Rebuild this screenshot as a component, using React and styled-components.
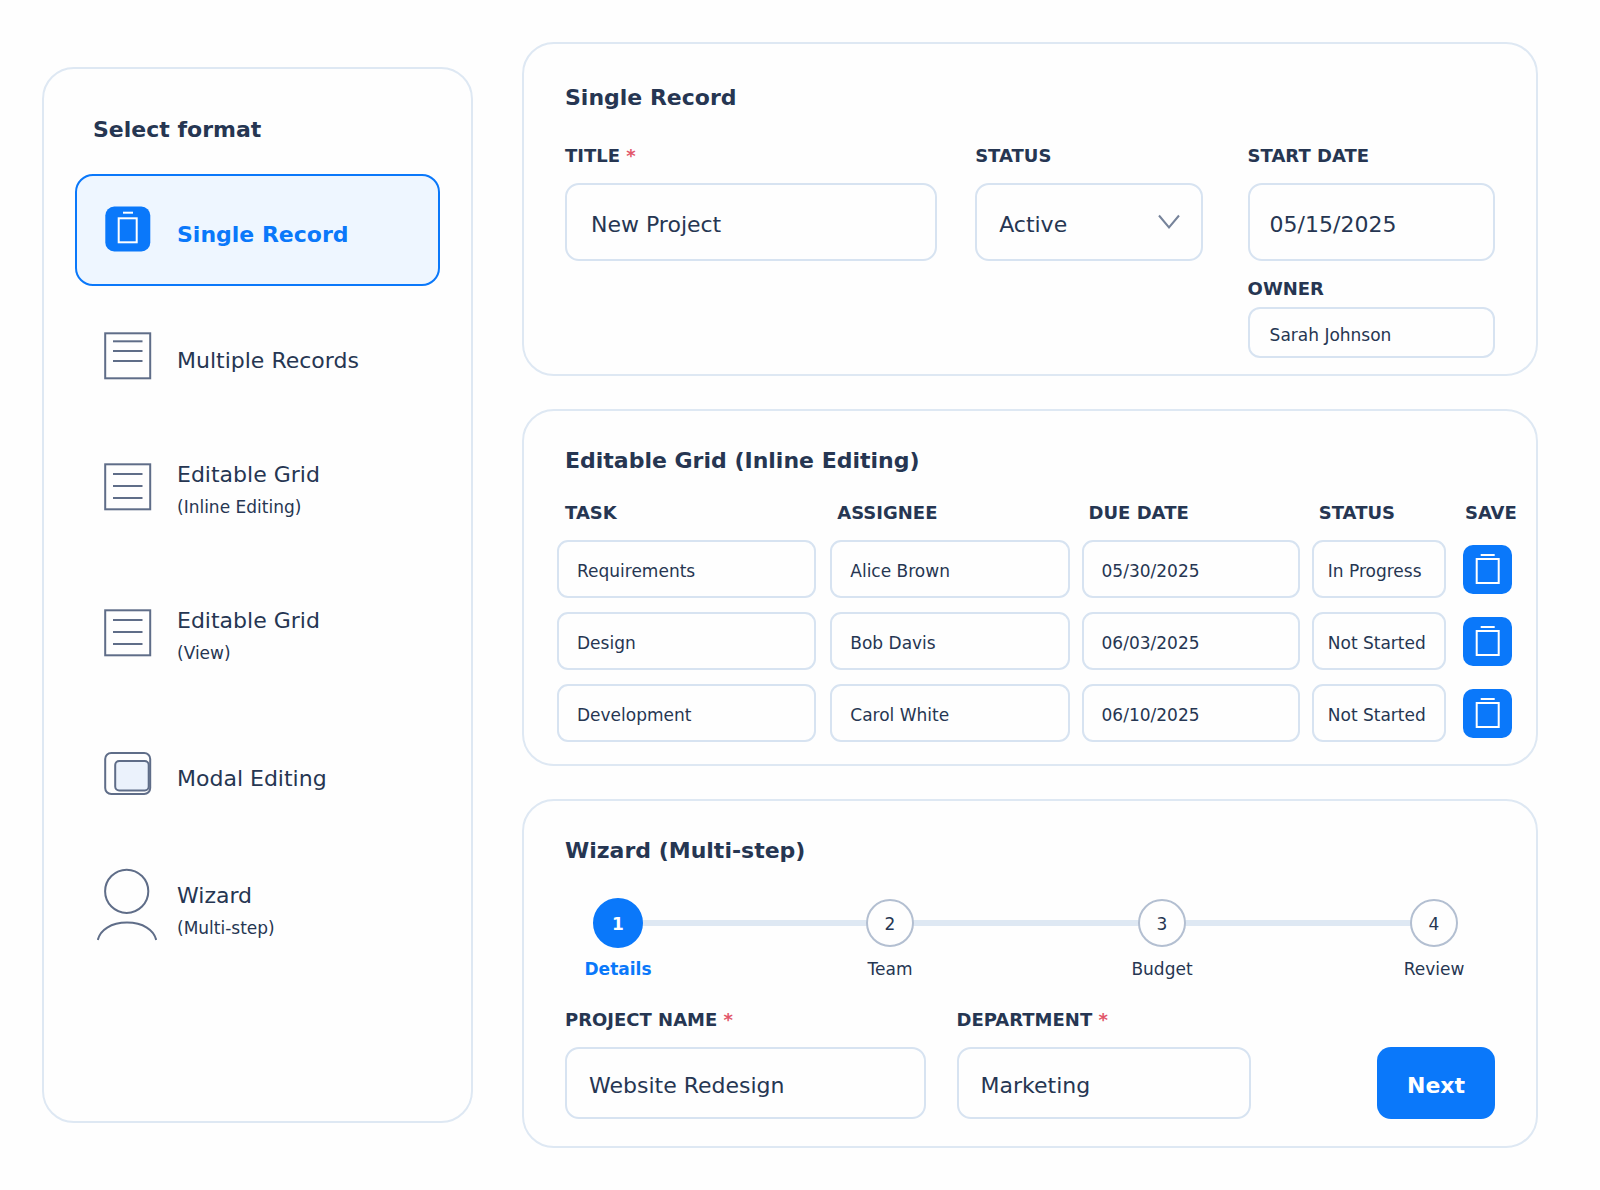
import React, { useState } from 'react';
import styled, { createGlobalStyle } from 'styled-components';

const ink = '#263652';
const blue = '#0a78fa';
const paper = '#fefefe';
const line = '#d7e3f1';
const cardLine = '#dee8f3';
const iconLine = '#5f6d88';

const GlobalStyle = createGlobalStyle`
    * {
        box-sizing: border-box;
    }
    body {
        margin: 0;
        background: ${paper};
        color: ${ink};
        font-family: "DejaVu Sans", Verdana, sans-serif;
    }
    button, input, select {
        font-family: inherit;
        color: inherit;
    }
`;

const Page = styled.div`
    display: grid;
    grid-template-columns: 431px minmax(0, 1fr);
    column-gap: 49px;
    padding: 42px 62px 42px 42px;
`;

const Sidebar = styled.nav`
    margin: 25px 0;
    padding: 48px 31px 31px;
    border: 2px solid ${cardLine};
    border-radius: 32px;
`;

const Heading = styled.h2`
    margin: 0;
    font-size: 22px;
    line-height: 26px;
    font-weight: 700;
`;

const SidebarHeading = styled(Heading)`
    padding: 0 18px;
    margin-bottom: 31px;
`;

const FormatList = styled.div`
    display: flex;
    flex-direction: column;
    gap: 14px;
`;

const FormatButton = styled.button`
    display: flex;
    align-items: center;
    gap: 20px;
    min-height: ${props => props.$height}px;
    padding: 0 20px;
    text-align: left;
    cursor: pointer;
    border: 2px solid ${props => props.$active ? blue : 'transparent'};
    border-radius: 18px;
    background: ${props => props.$active ? '#eef6ff' : 'transparent'};
    color: ${props => props.$active ? blue : ink};
    font-weight: ${props => props.$active ? 700 : 400};
`;

const FormatIcon = styled.svg`
    flex: none;
    width: 60px;
    height: 80px;
    fill: none;
    stroke: ${iconLine};
    stroke-width: 2;
`;

const FormatText = styled.span`
    display: flex;
    flex-direction: column;
    gap: 8px;
    padding-top: ${props => props.$single ? 10 : 5}px;
    font-size: 22px;
    line-height: 26px;
`;

const FormatNote = styled.span`
    font-size: 17px;
    line-height: 22px;
`;

const Content = styled.main`
    display: flex;
    flex-direction: column;
    gap: 33px;
`;

const Card = styled.section`
    border: 2px solid ${cardLine};
    border-radius: 32px;
    padding: 37px 41px 27px;
`;

const RecordCard = styled(Card)`
    padding-top: 41px;
    padding-bottom: 16px;
`;

const GridCard = styled(Card)`
    padding: 37px 13px 22px 33px;

    ${Heading} {
        padding-left: 8px;
    }
`;

const RecordForm = styled.form`
    display: grid;
    grid-template-columns: 373fr 228fr 255fr;
    column-gap: 38px;
    align-items: start;
    margin-top: 34px;
`;

const DateColumn = styled.div`
    display: flex;
    flex-direction: column;
    gap: 17px;
    padding-left: 7px;
`;

const Field = styled.div`
    display: flex;
    flex-direction: column;
    gap: ${props => props.$tight ? 7 : 16}px;
`;

const Label = styled.label`
    font-size: 18px;
    line-height: 22px;
    font-weight: 700;
`;

const Star = styled.span`
    color: #e2566a;
`;

const Input = styled.input`
    width: 100%;
    height: ${props => props.$height || 72}px;
    padding: 4px 22px 0;
    border: 2px solid ${line};
    border-radius: 14px;
    background: ${paper};
    font-size: 22px;
    outline: none;
    &:focus {
        border-color: ${blue};
    }
`;

const TitleInput = styled(Input)`
    padding: 4px 24px 0;
`;

const DateInput = styled(Input)`
    padding: 4px 20px 0;
`;

const OwnerInput = styled(DateInput)`
    border-radius: 12px;
    font-size: 17px;
`;

const SelectBox = styled.div`
    display: grid;
    align-items: center;

    & > * {
        grid-area: 1 / 1;
    }
`;

const Select = styled(Input).attrs({ as: 'select' })`
    appearance: none;
`;

const Chevron = styled.svg`
    justify-self: end;
    width: 22px;
    height: 16px;
    margin-right: 23px;
    fill: none;
    stroke: #76839a;
    stroke-width: 2;
    pointer-events: none;
`;

const Table = styled.table`
    width: 100%;
    margin-top: 28px;
    table-layout: fixed;
    border-collapse: collapse;
`;

const Col = styled.col`
    width: ${props => props.$width}px;
`;

const Th = styled.th`
    padding: 0 0 16px ${props => props.$inset}px;
    font-size: 18px;
    line-height: 22px;
    font-weight: 700;
    text-align: left;
    white-space: nowrap;
`;

const Td = styled.td`
    padding: 0 ${props => props.$gap}px 14px 0;
    vertical-align: middle;

    tr:last-child > & {
        padding-bottom: 0;
    }
`;

const CellInput = styled(Input)`
    display: block;
    padding: 4px 4px 0 ${props => props.$inset}px;
    border-radius: 11px;
    font-size: 17px;
`;

const SaveButton = styled.button`
    display: block;
    width: 49px;
    height: 49px;
    padding: 0;
    border: 0;
    border-radius: 10px;
    background: ${blue};
    cursor: pointer;

    svg {
        display: block;
        fill: none;
        stroke: white;
        stroke-width: 2;
    }
`;

const Steps = styled.ol`
    display: flex;
    align-items: flex-start;
    list-style: none;
    margin: 34px 11px 29px 3px;
    padding: 0;
`;

const Step = styled.li`
    display: flex;
    flex-direction: column;
    align-items: center;
    gap: 10px;
    width: 100px;
    z-index: 1;
    font-size: 17px;
    line-height: 22px;
    color: ${props => props.$active ? blue : ink};
    font-weight: ${props => props.$active ? 700 : 400};
`;

const StepCircle = styled.span`
    display: flex;
    align-items: center;
    justify-content: center;
    width: ${props => props.$active ? 50 : 48}px;
    height: ${props => props.$active ? 50 : 48}px;
    margin: ${props => props.$active ? 0 : 1}px;
    padding-top: 2px;
    border-radius: 50%;
    border: 2px solid ${props => props.$active ? blue : '#b3bfd1'};
    background: ${props => props.$active ? blue : paper};
    color: ${props => props.$active ? 'white' : ink};
`;

const Connector = styled.li`
    flex: 1;
    height: 6px;
    margin: 22px -27px 0;
    background: ${cardLine};
`;

const WizardForm = styled.form`
    display: grid;
    grid-template-columns: 361fr 295fr 213fr;
    column-gap: 31px;
    align-items: end;
`;

const NextButton = styled.button`
    justify-self: end;
    width: 118px;
    height: 72px;
    padding: 4px 0 0;
    border: 0;
    border-radius: 14px;
    background: ${blue};
    color: white;
    font-size: 22px;
    font-weight: 700;
    cursor: pointer;
`;

function SingleIcon() {
    return (
        <FormatIcon viewBox="0 -4 60 80" aria-hidden="true">
            <rect x="8.3" y="12.5" width="45" height="45" rx="9" fill={blue} stroke="none" />
            <rect x="21.7" y="24.3" width="18" height="24" stroke="white" />
            <path d="M26 18.7h10" stroke="white" />
        </FormatIcon>
    )
}

function ListIcon({ lines }) {
    return (
        <FormatIcon viewBox="0 -4 60 80" aria-hidden="true">
            <rect x="8.2" y="13.3" width="45" height="45" />
            {lines.map(y => <path key={y} d={`M16 ${y}h29.5`} />)}
        </FormatIcon>
    )
}

function ModalIcon() {
    return (
        <FormatIcon viewBox="0 -4 60 80" aria-hidden="true">
            <rect x="8.2" y="15" width="45" height="41" rx="6" />
            <rect x="18.2" y="23" width="33.5" height="29.5" rx="4" fill="#ebf2fc" />
        </FormatIcon>
    )
}

function PersonIcon() {
    return (
        <FormatIcon viewBox="0 -4 60 80" aria-hidden="true">
            <circle cx="29.7" cy="19.3" r="21.6" />
            <path d="M0.8 68C3 58 14 50.6 30 50.6S57 58 59.2 68" />
        </FormatIcon>
    )
}

const formats = [
    { id: 'single', name: 'Single Record', height: 112, icon: <SingleIcon /> },
    { id: 'multiple', name: 'Multiple Records', height: 112, icon: <ListIcon lines={[21.3, 31, 41]} /> },
    { id: 'grid', name: 'Editable Grid', note: '(Inline Editing)', height: 122, icon: <ListIcon lines={[23, 35, 47]} /> },
    { id: 'view', name: 'Editable Grid', note: '(View)', height: 142, icon: <ListIcon lines={[23, 35, 47]} /> },
    { id: 'modal', name: 'Modal Editing', height: 112, icon: <ModalIcon /> },
    { id: 'wizard', name: 'Wizard', note: '(Multi-step)', height: 128, icon: <PersonIcon /> },
];

const columns = [
    { name: 'Task', width: 273, head: 8, inset: 18, gap: 14 },
    { name: 'Assignee', width: 251, head: 7, inset: 18, gap: 12 },
    { name: 'Due date', width: 230, head: 7, inset: 18, gap: 12 },
    { name: 'Status', width: 151, head: 7, inset: 14, gap: 17 },
];

const tasks = [
    ['Requirements', 'Alice Brown', '05/30/2025', 'In Progress'],
    ['Design', 'Bob Davis', '06/03/2025', 'Not Started'],
    ['Development', 'Carol White', '06/10/2025', 'Not Started'],
];

const steps = ['Details', 'Team', 'Budget', 'Review'];

function FormatMenu() {
    const [active, setActive] = useState('single');
    return (
        <Sidebar>
            <SidebarHeading>Select format</SidebarHeading>
            <FormatList>
                {formats.map(f => (
                    <FormatButton
                        key={f.id}
                        type="button"
                        $active={f.id === active}
                        $height={f.height}
                        aria-pressed={f.id === active}
                        onClick={() => setActive(f.id)}
                    >
                        {f.icon}
                        <FormatText $single={!f.note}>
                            {f.name}
                            {f.note && <FormatNote>{f.note}</FormatNote>}
                        </FormatText>
                    </FormatButton>
                ))}
            </FormatList>
        </Sidebar>
    )
}

function SingleRecord() {
    return (
        <RecordCard>
            <Heading>Single Record</Heading>
            <RecordForm>
                <Field>
                    <Label htmlFor="title">TITLE <Star>*</Star></Label>
                    <TitleInput id="title" $height={78} defaultValue="New Project" required />
                </Field>
                <Field>
                    <Label htmlFor="status">STATUS</Label>
                    <SelectBox>
                        <Select id="status" $height={78} defaultValue="Active">
                            <option>Active</option>
                            <option>Inactive</option>
                        </Select>
                        <Chevron viewBox="0 0 22 16" aria-hidden="true">
                            <path d="M1 1.5L11 13.5L21 1.5" />
                        </Chevron>
                    </SelectBox>
                </Field>
                <DateColumn>
                    <Field>
                        <Label htmlFor="start">START DATE</Label>
                        <DateInput id="start" $height={78} defaultValue="05/15/2025" />
                    </Field>
                    <Field $tight>
                        <Label htmlFor="owner">OWNER</Label>
                        <OwnerInput id="owner" $height={51} defaultValue="Sarah Johnson" />
                    </Field>
                </DateColumn>
            </RecordForm>
        </RecordCard>
    )
}

function EditableGrid() {
    return (
        <GridCard>
            <Heading>Editable Grid (Inline Editing)</Heading>
            <Table>
                <colgroup>
                    {columns.map(c => <Col key={c.name} $width={c.width} />)}
                    <Col $width={60} />
                </colgroup>
                <thead>
                    <tr>
                        {columns.map(c => <Th key={c.name} scope="col" $inset={c.head}>{c.name.toUpperCase()}</Th>)}
                        <Th scope="col" $inset={2}>SAVE</Th>
                    </tr>
                </thead>
                <tbody>
                    {tasks.map(row => (
                        <tr key={row[0]}>
                            {columns.map((c, i) => (
                                <Td key={c.name} $gap={c.gap}>
                                    <CellInput $height={58} $inset={c.inset} aria-label={c.name} defaultValue={row[i]} />
                                </Td>
                            ))}
                            <Td $gap={0}>
                                <SaveButton type="button" aria-label={`Save ${row[0]}`}>
                                    <svg width="49" height="49" viewBox="0 0 49 49" aria-hidden="true">
                                        <rect x="13.7" y="14" width="22" height="24" />
                                        <path d="M17.7 10h14" />
                                    </svg>
                                </SaveButton>
                            </Td>
                        </tr>
                    ))}
                </tbody>
            </Table>
        </GridCard>
    )
}

function Wizard() {
    return (
        <Card>
            <Heading>Wizard (Multi-step)</Heading>
            <Steps>
                {steps.map((name, i) => (
                    <React.Fragment key={name}>
                        {i > 0 && <Connector aria-hidden="true" />}
                        <Step $active={i === 0} aria-current={i === 0 ? 'step' : undefined}>
                            <StepCircle $active={i === 0}>{i + 1}</StepCircle>
                            {name}
                        </Step>
                    </React.Fragment>
                ))}
            </Steps>
            <WizardForm>
                <Field>
                    <Label htmlFor="project">PROJECT NAME <Star>*</Star></Label>
                    <Input id="project" defaultValue="Website Redesign" required />
                </Field>
                <Field>
                    <Label htmlFor="department">DEPARTMENT <Star>*</Star></Label>
                    <Input id="department" defaultValue="Marketing" required />
                </Field>
                <NextButton type="button">Next</NextButton>
            </WizardForm>
        </Card>
    )
}

export default function App() {
    return (
        <React.Fragment>
            <GlobalStyle />
            <Page>
                <FormatMenu />
                <Content>
                    <SingleRecord />
                    <EditableGrid />
                    <Wizard />
                </Content>
            </Page>
        </React.Fragment>
    )
}
